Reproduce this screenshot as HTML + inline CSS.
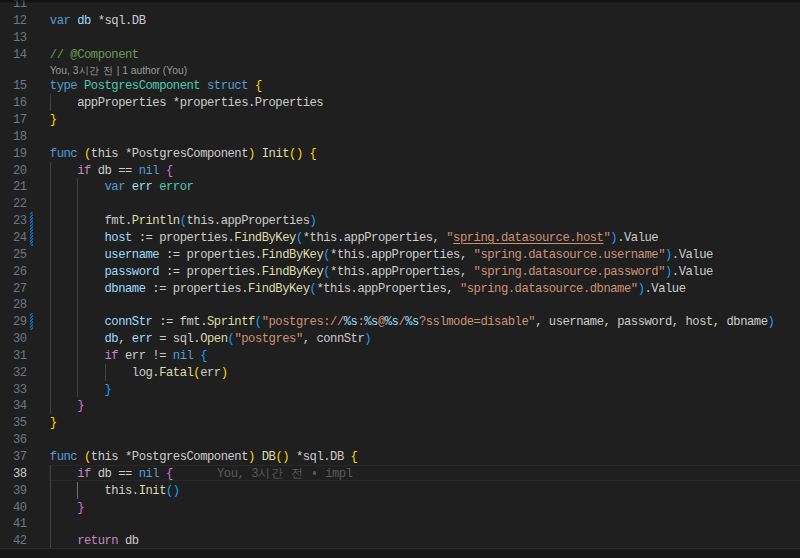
<!DOCTYPE html>
<html><head><meta charset="utf-8"><style>
html,body{margin:0;padding:0;width:800px;height:558px;overflow:hidden;background:#1f1f1f;}
body{position:relative;font-family:"Liberation Mono",monospace;}
.l{position:absolute;left:49.80px;height:16.85px;line-height:16.85px;font-size:12.20px;letter-spacing:-0.4791px;white-space:pre;color:#cccccc;}
.n{position:absolute;left:0;width:26.60px;text-align:right;height:16.85px;line-height:16.85px;font-size:12.20px;letter-spacing:-0.4791px;white-space:pre;color:#6e7681;}
.g{position:absolute;width:1px;background:#404040;}
.u{color:#ce9178;text-decoration:underline;text-decoration-color:#ce9178;text-underline-offset:2px;text-decoration-thickness:1px}
.d{position:absolute;left:30px;width:3.3px;background-image:linear-gradient(-45deg,#0a68bb 25%,#1f1f1f 25%,#1f1f1f 50%,#0a68bb 50%,#0a68bb 75%,#1f1f1f 75%,#1f1f1f);background-size:3px 3px;}
</style></head><body>
<div style="position:absolute;left:49.30px;top:464.85px;width:800px;height:16.10px;box-sizing:border-box;border:1px solid #282828;border-right:none"></div>
<div class="g" style="left:49.80px;top:94.15px;height:16.85px;background:#404040"></div>
<div class="g" style="left:49.80px;top:161.55px;height:252.75px;background:#404040"></div>
<div class="g" style="left:77.17px;top:178.40px;height:219.05px;background:#404040"></div>
<div class="g" style="left:104.54px;top:363.75px;height:16.85px;background:#404040"></div>
<div class="g" style="left:49.80px;top:464.85px;height:84.25px;background:#404040"></div>
<div class="g" style="left:77.17px;top:481.70px;height:16.85px;background:#707070"></div>
<div class="d" style="top:212.10px;height:33.70px"></div>
<div class="d" style="top:313.20px;height:16.85px"></div>
<div class="n" style="top:-3.95px;color:#6e7681">11</div><div class="l" style="top:-3.95px"></div>
<div class="n" style="top:12.90px;color:#6e7681">12</div><div class="l" style="top:12.90px"><span style="color:#569cd6">var</span><span style="color:#cccccc"> </span><span style="color:#9cdcfe">db</span><span style="color:#cccccc"> *sql.DB</span></div>
<div class="n" style="top:29.75px;color:#6e7681">13</div><div class="l" style="top:29.75px"></div>
<div class="n" style="top:46.60px;color:#6e7681">14</div><div class="l" style="top:46.60px"><span style="color:#6a9955">// @Component</span></div>
<div class="n" style="top:78.30px;color:#6e7681">15</div><div class="l" style="top:78.30px"><span style="color:#569cd6">type</span><span style="color:#cccccc"> </span><span style="color:#4ec9b0">PostgresComponent</span><span style="color:#cccccc"> </span><span style="color:#569cd6">struct</span><span style="color:#cccccc"> </span><span style="color:#ffd700">{</span></div>
<div class="n" style="top:95.15px;color:#6e7681">16</div><div class="l" style="top:95.15px"><span style="color:#cccccc">    appProperties *properties.Properties</span></div>
<div class="n" style="top:112.00px;color:#6e7681">17</div><div class="l" style="top:112.00px"><span style="color:#ffd700">}</span></div>
<div class="n" style="top:128.85px;color:#6e7681">18</div><div class="l" style="top:128.85px"></div>
<div class="n" style="top:145.70px;color:#6e7681">19</div><div class="l" style="top:145.70px"><span style="color:#569cd6">func</span><span style="color:#cccccc"> </span><span style="color:#ffd700">(</span><span style="color:#cccccc">this *PostgresComponent</span><span style="color:#ffd700">)</span><span style="color:#cccccc"> </span><span style="color:#dcdcaa">Init</span><span style="color:#ffd700">()</span><span style="color:#cccccc"> </span><span style="color:#ffd700">{</span></div>
<div class="n" style="top:162.55px;color:#6e7681">20</div><div class="l" style="top:162.55px"><span style="color:#cccccc">    </span><span style="color:#c586c0">if</span><span style="color:#cccccc"> db == </span><span style="color:#569cd6">nil</span><span style="color:#cccccc"> </span><span style="color:#da70d6">{</span></div>
<div class="n" style="top:179.40px;color:#6e7681">21</div><div class="l" style="top:179.40px"><span style="color:#cccccc">        </span><span style="color:#569cd6">var</span><span style="color:#cccccc"> </span><span style="color:#9cdcfe">err</span><span style="color:#cccccc"> </span><span style="color:#4ec9b0">error</span></div>
<div class="n" style="top:196.25px;color:#6e7681">22</div><div class="l" style="top:196.25px"></div>
<div class="n" style="top:213.10px;color:#6e7681">23</div><div class="l" style="top:213.10px"><span style="color:#cccccc">        fmt.</span><span style="color:#dcdcaa">Println</span><span style="color:#179fff">(</span><span style="color:#cccccc">this.appProperties</span><span style="color:#179fff">)</span></div>
<div class="n" style="top:229.95px;color:#6e7681">24</div><div class="l" style="top:229.95px"><span style="color:#cccccc">        </span><span style="color:#9cdcfe">host</span><span style="color:#cccccc"> := properties.</span><span style="color:#dcdcaa">FindByKey</span><span style="color:#179fff">(</span><span style="color:#cccccc">*this.appProperties, </span><span style="color:#ce9178">&quot;</span><span class="u">spring.datasource.host</span><span style="color:#ce9178">&quot;</span><span style="color:#179fff">)</span><span style="color:#cccccc">.Value</span></div>
<div class="n" style="top:246.80px;color:#6e7681">25</div><div class="l" style="top:246.80px"><span style="color:#cccccc">        </span><span style="color:#9cdcfe">username</span><span style="color:#cccccc"> := properties.</span><span style="color:#dcdcaa">FindByKey</span><span style="color:#179fff">(</span><span style="color:#cccccc">*this.appProperties, </span><span style="color:#ce9178">&quot;spring.datasource.username&quot;</span><span style="color:#179fff">)</span><span style="color:#cccccc">.Value</span></div>
<div class="n" style="top:263.65px;color:#6e7681">26</div><div class="l" style="top:263.65px"><span style="color:#cccccc">        </span><span style="color:#9cdcfe">password</span><span style="color:#cccccc"> := properties.</span><span style="color:#dcdcaa">FindByKey</span><span style="color:#179fff">(</span><span style="color:#cccccc">*this.appProperties, </span><span style="color:#ce9178">&quot;spring.datasource.password&quot;</span><span style="color:#179fff">)</span><span style="color:#cccccc">.Value</span></div>
<div class="n" style="top:280.50px;color:#6e7681">27</div><div class="l" style="top:280.50px"><span style="color:#cccccc">        </span><span style="color:#9cdcfe">dbname</span><span style="color:#cccccc"> := properties.</span><span style="color:#dcdcaa">FindByKey</span><span style="color:#179fff">(</span><span style="color:#cccccc">*this.appProperties, </span><span style="color:#ce9178">&quot;spring.datasource.dbname&quot;</span><span style="color:#179fff">)</span><span style="color:#cccccc">.Value</span></div>
<div class="n" style="top:297.35px;color:#6e7681">28</div><div class="l" style="top:297.35px"></div>
<div class="n" style="top:314.20px;color:#6e7681">29</div><div class="l" style="top:314.20px"><span style="color:#cccccc">        </span><span style="color:#9cdcfe">connStr</span><span style="color:#cccccc"> := fmt.</span><span style="color:#dcdcaa">Sprintf</span><span style="color:#179fff">(</span><span style="color:#ce9178">&quot;postgres://</span><span style="color:#9cdcfe">%s</span><span style="color:#ce9178">:</span><span style="color:#9cdcfe">%s</span><span style="color:#ce9178">@</span><span style="color:#9cdcfe">%s</span><span style="color:#ce9178">/</span><span style="color:#9cdcfe">%s</span><span style="color:#ce9178">?sslmode=disable&quot;</span><span style="color:#cccccc">, username, password, host, dbname</span><span style="color:#179fff">)</span></div>
<div class="n" style="top:331.05px;color:#6e7681">30</div><div class="l" style="top:331.05px"><span style="color:#cccccc">        </span><span style="color:#9cdcfe">db</span><span style="color:#cccccc">, </span><span style="color:#9cdcfe">err</span><span style="color:#cccccc"> = sql.</span><span style="color:#dcdcaa">Open</span><span style="color:#179fff">(</span><span style="color:#ce9178">&quot;postgres&quot;</span><span style="color:#cccccc">, connStr</span><span style="color:#179fff">)</span></div>
<div class="n" style="top:347.90px;color:#6e7681">31</div><div class="l" style="top:347.90px"><span style="color:#cccccc">        </span><span style="color:#c586c0">if</span><span style="color:#cccccc"> err != </span><span style="color:#569cd6">nil</span><span style="color:#cccccc"> </span><span style="color:#179fff">{</span></div>
<div class="n" style="top:364.75px;color:#6e7681">32</div><div class="l" style="top:364.75px"><span style="color:#cccccc">            log.</span><span style="color:#dcdcaa">Fatal</span><span style="color:#ffd700">(</span><span style="color:#cccccc">err</span><span style="color:#ffd700">)</span></div>
<div class="n" style="top:381.60px;color:#6e7681">33</div><div class="l" style="top:381.60px"><span style="color:#cccccc">        </span><span style="color:#179fff">}</span></div>
<div class="n" style="top:398.45px;color:#6e7681">34</div><div class="l" style="top:398.45px"><span style="color:#cccccc">    </span><span style="color:#da70d6">}</span></div>
<div class="n" style="top:415.30px;color:#6e7681">35</div><div class="l" style="top:415.30px"><span style="color:#ffd700">}</span></div>
<div class="n" style="top:432.15px;color:#6e7681">36</div><div class="l" style="top:432.15px"></div>
<div class="n" style="top:449.00px;color:#6e7681">37</div><div class="l" style="top:449.00px"><span style="color:#569cd6">func</span><span style="color:#cccccc"> </span><span style="color:#ffd700">(</span><span style="color:#cccccc">this *PostgresComponent</span><span style="color:#ffd700">)</span><span style="color:#cccccc"> </span><span style="color:#dcdcaa">DB</span><span style="color:#ffd700">()</span><span style="color:#cccccc"> *sql.DB </span><span style="color:#ffd700">{</span></div>
<div class="n" style="top:465.85px;color:#cccccc">38</div><div class="l" style="top:465.85px"><span style="color:#cccccc">    </span><span style="color:#c586c0">if</span><span style="color:#cccccc"> db == </span><span style="color:#569cd6">nil</span><span style="color:#cccccc"> </span><span style="color:#da70d6">{</span></div>
<div class="n" style="top:482.70px;color:#6e7681">39</div><div class="l" style="top:482.70px"><span style="color:#cccccc">        this.</span><span style="color:#dcdcaa">Init</span><span style="color:#179fff">()</span></div>
<div class="n" style="top:499.55px;color:#6e7681">40</div><div class="l" style="top:499.55px"><span style="color:#cccccc">    </span><span style="color:#da70d6">}</span></div>
<div class="n" style="top:516.40px;color:#6e7681">41</div><div class="l" style="top:516.40px"></div>
<div class="n" style="top:533.25px;color:#6e7681">42</div><div class="l" style="top:533.25px"><span style="color:#cccccc">    </span><span style="color:#c586c0">return</span><span style="color:#cccccc"> db</span></div>
<div style="position:absolute;left:49.7px;top:64.10px;font-family:'Liberation Sans',sans-serif;font-size:10.3px;line-height:14px;color:#999999;white-space:pre">You, 3<span style="letter-spacing:0.6px">시간 전</span> | 1 author (You)</div>
<div class="l" style="left:217px;top:465.85px;color:#5a5a5a">You, 3<span style="letter-spacing:1.0px">시간</span> <span style="letter-spacing:1.0px">전</span> <span style="display:inline-block;width:7.6px;height:10px;position:relative;vertical-align:baseline"><span style="position:absolute;left:1.9px;top:4.6px;width:3.7px;height:3.7px;border-radius:50%;background:#5a5a5a"></span></span> impl</div>
<div style="position:absolute;left:0;top:0;width:800px;height:3px;box-shadow:#000 0 6px 6px -6px inset"></div>
<div style="position:absolute;left:0;top:548px;width:800px;height:1px;background:#2b2b2b"></div>
<div style="position:absolute;left:0;top:549px;width:800px;height:9px;background:#181818"></div>
</body></html>
